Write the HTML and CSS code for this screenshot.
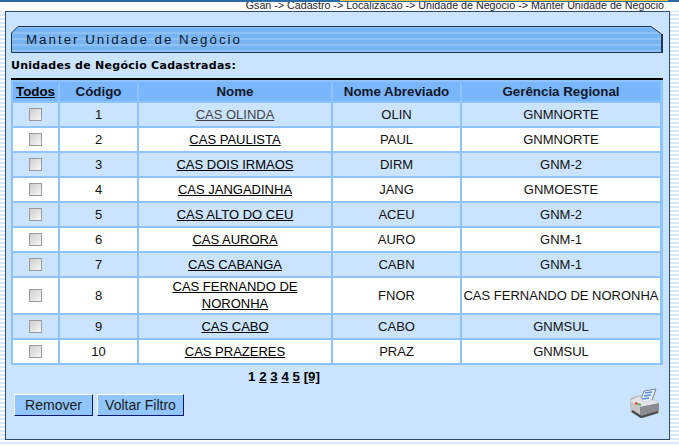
FILE: index.html
```html
<!DOCTYPE html>
<html lang="pt">
<head>
<meta charset="utf-8">
<title>Manter Unidade de Negócio</title>
<link rel="stylesheet" href="styles.css">
</head>
<body>
<div class="topline"><div class="topline-accent"></div></div>
<div class="crumb">Gsan -&gt; Cadastro -&gt; Localizacao -&gt; Unidade de Negocio -&gt; Manter Unidade de Negocio</div>
<main class="panel">
  <div class="titlebar">
    <svg class="titlebar-bg" width="652" height="27" viewBox="0 0 652 27">
      <defs>
        <pattern id="bands" width="6" height="6" patternUnits="userSpaceOnUse">
          <rect width="6" height="6" fill="#79b4f2"/>
          <rect y="0" width="6" height="2" fill="#8ec1f6"/>
        </pattern>
      </defs>
      <path d="M.5 26.5V7L7 .5H640L650.5 8V26.5Z" fill="url(#bands)" stroke="#1f3550"/>
      <path d="M651 8V27" stroke="#1f3550" stroke-width="2"/>
    </svg>
    <span class="titlebar-text">Manter Unidade de Negócio</span>
  </div>
  <h2 class="subtitle">Unidades de Negócio Cadastradas:</h2>
  <div class="rule"></div>
  <table class="grid">
    <colgroup><col class="c1"><col class="c2"><col class="c3"><col class="c4"><col class="c5"></colgroup>
    <thead>
      <tr><th><a href="#">Todos</a></th><th>Código</th><th>Nome</th><th>Nome Abreviado</th><th>Gerência Regional</th></tr>
    </thead>
    <tbody>
      <tr class="odd"><td><span class="check"></span></td><td>1</td><td><a class="visited" href="#">CAS OLINDA</a></td><td>OLIN</td><td>GNMNORTE</td></tr>
      <tr class="even"><td><span class="check"></span></td><td>2</td><td><a href="#">CAS PAULISTA</a></td><td>PAUL</td><td>GNMNORTE</td></tr>
      <tr class="odd"><td><span class="check"></span></td><td>3</td><td><a href="#">CAS DOIS IRMAOS</a></td><td>DIRM</td><td>GNM-2</td></tr>
      <tr class="even"><td><span class="check"></span></td><td>4</td><td><a href="#">CAS JANGADINHA</a></td><td>JANG</td><td>GNMOESTE</td></tr>
      <tr class="odd"><td><span class="check"></span></td><td>5</td><td><a href="#">CAS ALTO DO CEU</a></td><td>ACEU</td><td>GNM-2</td></tr>
      <tr class="even"><td><span class="check"></span></td><td>6</td><td><a href="#">CAS AURORA</a></td><td>AURO</td><td>GNM-1</td></tr>
      <tr class="odd"><td><span class="check"></span></td><td>7</td><td><a href="#">CAS CABANGA</a></td><td>CABN</td><td>GNM-1</td></tr>
      <tr class="even"><td><span class="check"></span></td><td>8</td><td><a class="wrap" href="#">CAS FERNANDO DE NORONHA</a></td><td>FNOR</td><td class="nowrap">CAS FERNANDO DE NORONHA</td></tr>
      <tr class="odd"><td><span class="check"></span></td><td>9</td><td><a href="#">CAS CABO</a></td><td>CABO</td><td>GNMSUL</td></tr>
      <tr class="even"><td><span class="check"></span></td><td>10</td><td><a href="#">CAS PRAZERES</a></td><td>PRAZ</td><td>GNMSUL</td></tr>
    </tbody>
  </table>
  <div class="pager"><strong>1</strong> <a href="#">2</a> <a href="#">3</a> <a href="#">4</a> <a href="#">5</a> <a href="#">[9]</a></div>
  <div class="actions">
    <div class="buttons">
      <button class="btn btn-remove" type="button">Remover</button>
      <button class="btn btn-back" type="button">Voltar Filtro</button>
    </div>
    <svg class="printer" width="32" height="30" viewBox="0 0 32 30" aria-label="Imprimir">
      <path d="M15 3l12-2-5 14-11-1z" fill="#e4ecf6" stroke="#76859b"/>
      <path d="M16 5l7-1M15 8l7-1M13 11l7-1" stroke="#5f8fd6" stroke-width="1.5"/>
      <path d="M1 12q0-2 3-3l8-2 2 7 8-2 6 1q2 1 2 3v9l-15 5q-2 0-3-1L2 24q-1-1-1-3z" fill="#b4b7ba"/>
      <path d="M1 13l10 6 19-4-3-2-5-1-8 2-3-6-7 3z" fill="#e2e3e4"/>
      <path d="M11 19v9L2 24q-1-1-1-3v-8z" fill="#c4c6c8"/>
      <path d="M11 19l19-4v8l-19 5z" fill="#8a8d91"/>
      <path d="M3 23l9 6 17-5" fill="none" stroke="#46484c" stroke-width="2.2"/>
      <path d="M6 15l3 1" stroke="#d84a3c" stroke-width="2"/>
      <path d="M9 16l3 1" stroke="#4dbb5a" stroke-width="2"/>
    </svg>
  </div>
</main>
</body>
</html>
```
FILE: styles.css
```css
* { box-sizing: border-box; }
html, body { margin: 0; height: 100%; }
body {
  width: 679px;
  height: 446px;
  overflow: hidden;
  font-family: "Liberation Sans", Arial, sans-serif;
  color: #000;
  background: repeating-linear-gradient(to bottom, #ffffff 0, #ffffff 2px, #d6e8fb 2px, #d6e8fb 4px);
}
.topline { height: 2px; background: #2a6aa6; position: relative; }
.topline-accent { position: absolute; right: 11px; top: 0; width: 328px; height: 1px; background: #f7c531; }
.crumb {
  height: 9px;
  line-height: 7px;
  padding-right: 15px;
  text-align: right;
  font-size: 10.7px;
  background: #fff;
  color: #1c1c2c;
  white-space: nowrap;
}
.panel {
  width: 665px;
  height: 429px;
  margin-left: 5px;
  padding: 14px 5px 0;
  border: 1px solid #2d4a6b;
  background: #cae3fe;
}
.titlebar {
  position: relative;
  width: 652px;
  height: 27px;
  display: flex;
  align-items: center;
  padding: 0 0 0 15px;
}
.titlebar-bg { position: absolute; left: 0; top: 0; }
.titlebar-text {
  position: relative;
  font-size: 13.33px;
  letter-spacing: 2px;
  color: #0c1a2e;
}
.subtitle {
  margin: 5px 0 0;
  height: 16px;
  line-height: 16px;
  font-family: "DejaVu Sans", Verdana, sans-serif;
  font-size: 11px;
  font-weight: bold;
  letter-spacing: 0.28px;
}
.rule { width: 652px; height: 2px; margin-top: 4px; background: #000; }
.grid {
  width: 652px;
  table-layout: fixed;
  border-collapse: separate;
  border-spacing: 2px;
  background: #8fc3fc;
  font-size: 13px;
  margin: 0;
  padding: 0 1px 0 0;
}
.c1 { width: 45px; }
.c2 { width: 77px; }
.c3 { width: 192px; }
.c4 { width: 127px; }
.c5 { width: 198px; }
.grid th {
  height: 19px;
  padding: 0;
  background: #79b6fb;
  font-weight: bold;
  font-size: 13.33px;
  color: #10182a;
}
.grid td {
  height: 23px;
  padding: 0 0 1px;
  line-height: 17px;
  text-align: center;
  color: #111;
}
.grid td.nowrap { white-space: nowrap; }
.grid a { color: #000; }
.grid a.visited { color: #444; }
.odd td { background: #cae3fe; }
.even td { background: #fff; }
.check {
  display: inline-block;
  width: 13px;
  height: 13px;
  vertical-align: middle;
  margin-top: -2px;
  border: 1px solid #9a9a9a;
  background: linear-gradient(135deg, #cdcdcd, #f8f8f8);
}
.pager {
  margin-top: 4px;
  height: 16px;
  line-height: 16px;
  padding-left: 237px;
  font-size: 13.33px;
  font-weight: bold;
}
.pager a { color: #000; }
.actions {
  display: flex;
  justify-content: space-between;
  align-items: flex-start;
  margin-top: 9px;
  padding-right: 3px;
}
.buttons { display: flex; gap: 4px; padding-left: 3px; }
.btn {
  height: 22px;
  padding: 0;
  border: 1px solid;
  border-color: #fff #0a1a6a #0a1a6a #fff;
  background: #90c6fd;
  font-family: "Liberation Sans", Arial, sans-serif;
  font-size: 14px;
  color: #1a1a1a;
}
.btn-remove { width: 79px; }
.btn-back { width: 87px; }
.printer { margin-top: -6px; }
```
